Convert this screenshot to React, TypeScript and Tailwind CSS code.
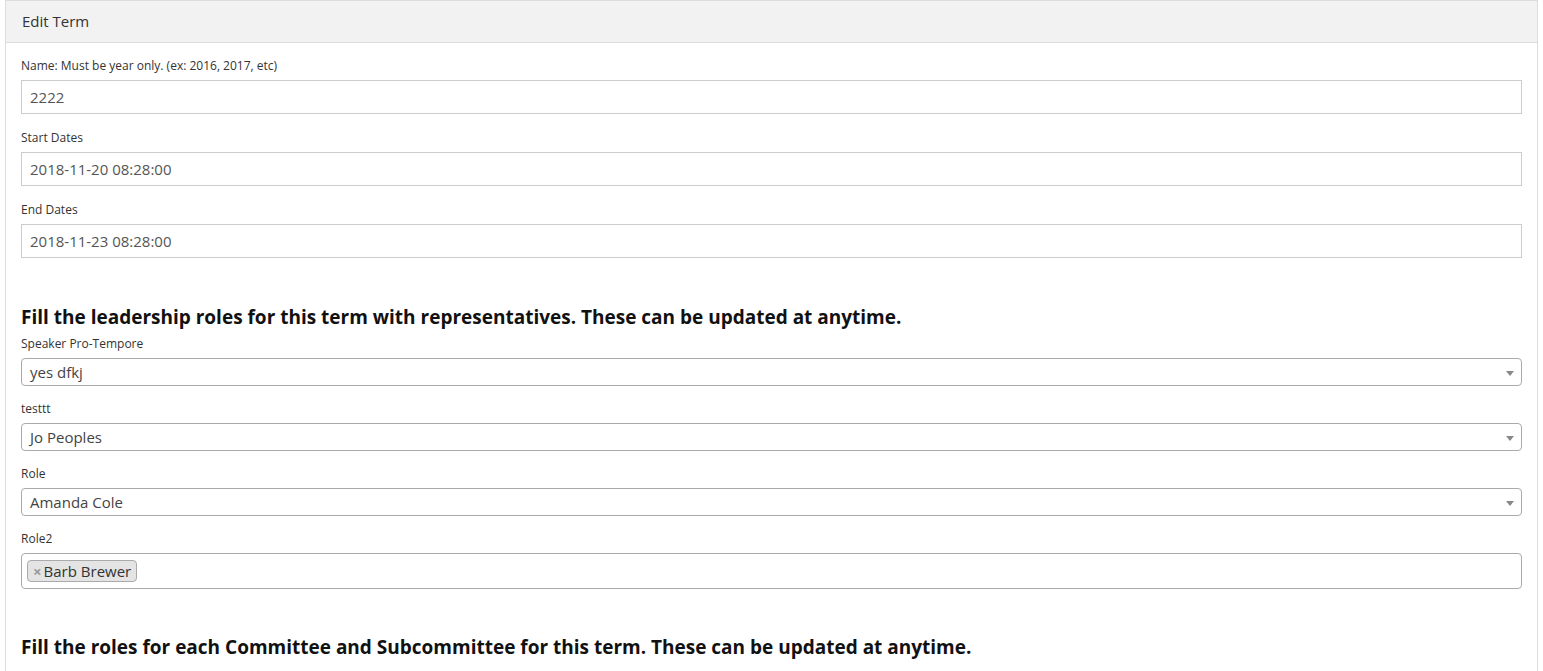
import React from "react";

const font = { fontFamily: '"Open Sans", "Noto Sans", sans-serif' };

function Label({ children }: { children: React.ReactNode }) {
  return <div className="text-[12px] leading-[17px] mb-[6px] text-[#333]">{children}</div>;
}

function TextInput({ value }: { value: string }) {
  return (
    <div className="h-[34px] border border-[#ccc] bg-white flex items-center px-[8px] text-[15px] text-[#555]">
      {value}
    </div>
  );
}

function Select({ value }: { value: string }) {
  return (
    <div className="relative h-[28px] border border-[#aaa] rounded-[4px] bg-white flex items-center pl-[8px] text-[15px] text-[#444]">
      <span>{value}</span>
      <span className="absolute right-[7px] top-[12px] w-0 h-0 border-l-[4px] border-r-[4px] border-t-[5px] border-l-transparent border-r-transparent border-t-[#888]" />
    </div>
  );
}

export default function App() {
  return (
    <div className="bg-white min-h-[671px] px-[5px]" style={font}>
      <div className="border border-[#ddd] min-h-[680px]">
        <div className="h-[42px] bg-[#f2f2f2] border-b border-[#ddd] flex items-center px-[16px] text-[15px] text-[#333]">
          Edit Term
        </div>
        <div className="px-[15px] pt-[14px]">
          <div className="mb-[15px]">
            <Label>Name: Must be year only. (ex: 2016, 2017, etc)</Label>
            <TextInput value="2222" />
          </div>
          <div className="mb-[15px]">
            <Label>Start Dates</Label>
            <TextInput value="2018-11-20 08:28:00" />
          </div>
          <div>
            <Label>End Dates</Label>
            <TextInput value="2018-11-23 08:28:00" />
          </div>
          <h3 className="mt-[47px] text-[19px] leading-[24px] font-bold text-[#111]">
            Fill the leadership roles for this term with representatives. These can be updated at anytime.
          </h3>
          <div className="mt-[6px] mb-[14px]">
            <Label>Speaker Pro-Tempore</Label>
            <Select value="yes dfkj" />
          </div>
          <div className="mb-[14px]">
            <Label>testtt</Label>
            <Select value="Jo Peoples" />
          </div>
          <div className="mb-[14px]">
            <Label>Role</Label>
            <Select value="Amanda Cole" />
          </div>
          <div>
            <Label>Role2</Label>
            <div className="h-[36px] border border-[#aaa] rounded-[4px] bg-white flex items-center pl-[5px]">
              <div className="h-[22px] flex items-center bg-[#e4e4e4] border border-[#aaa] rounded-[4px] pl-[5px] pr-[5px] text-[15px] text-[#333]">
                <span className="text-[#999] font-bold text-[15px] leading-none mr-[2px]">×</span>
                <span>Barb Brewer</span>
              </div>
            </div>
          </div>
          <h3 className="mt-[46px] text-[19px] leading-[24px] font-bold text-[#111]">
            Fill the roles for each Committee and Subcommittee for this term. These can be updated at anytime.
          </h3>
        </div>
      </div>
    </div>
  );
}
